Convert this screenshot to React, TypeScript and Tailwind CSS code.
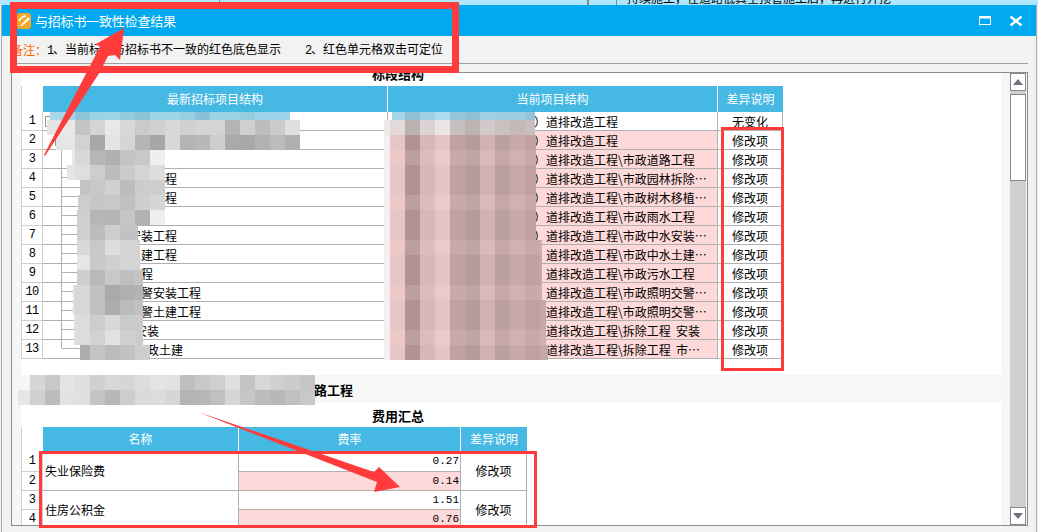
import React from 'react';

type TreeRow = { text: string; pad: number };

const treeRows: TreeRow[] = [
  { text: '', pad: 0 },
  { text: '', pad: 0 },
  { text: '', pad: 0 },
  { text: '工程', pad: 110 },
  { text: '工程', pad: 110 },
  { text: '', pad: 0 },
  { text: '安装工程', pad: 86 },
  { text: '土建工程', pad: 86 },
  { text: '水工程', pad: 74 },
  { text: '交警安装工程', pad: 86 },
  { text: '交警土建工程', pad: 86 },
  { text: '安装', pad: 92 },
  { text: '市政土建', pad: 92 },
];

const currentRows = [
  '道排改造工程',
  '道排改造工程',
  '道排改造工程\\市政道路工程',
  '道排改造工程\\市政园林拆除…',
  '道排改造工程\\市政树木移植…',
  '道排改造工程\\市政雨水工程',
  '道排改造工程\\市政中水安装…',
  '道排改造工程\\市政中水土建…',
  '道排改造工程\\市政污水工程',
  '道排改造工程\\市政照明交警…',
  '道排改造工程\\市政照明交警…',
  '道排改造工程\\拆除工程  安装',
  '道排改造工程\\拆除工程  市…',
];

type MosaicRow = { y: number; h: number; x0: number; x1?: number; cols: string[] };

const gray: MosaicRow[] = [
  { y: 112, h: 8, x0: 50, x1: 290, cols: ['a8d8ea', 'a4d6ea', '8fc4da', '9ed0e6', '9fd5ea', '93cade', '8cc2d8', '9ed3e8', '9fd5ea', '99cfe3', '8bc0d6', '9dd2e6', '9dd2e6', '97cce0', '9fd5ea', '9fd5ea', '9fd5ea'] },
  { y: 120, h: 15, x0: 47, cols: ['e4e4e4', 'e8e8e8', 'c4c4c4', 'd4d4d4', 'e8e8e8', 'd8d8d8', 'cacaca', 'd0d0d0', 'd8d8d8', 'd0d0d0', 'd4d4d4', 'd4d4d4', 'b4b4b4', 'cfcfcf', 'bdbdbd', 'cbcbcb', 'dfdfdf'] },
  { y: 135, h: 15, x0: 56, cols: ['e6e6e6', 'e6e6e6', 'd2d2d2', 'a8a8a8', 'e4e4e4', 'd6d6d6', 'b5b5b5', 'a6a6a6', 'd8d8d8', 'b4b4b4', 'b8b8b8', 'cecece', 'aaaaaa', 'a8a8a8', 'b2b2b2', 'bcbcbc', 'b0b0b0'] },
  { y: 150, h: 15, x0: 72, cols: ['e8e8e8', 'd8d8d8', 'b6b6b6', 'b0b0b0', 'c4c4c4', 'c8c8c8', 'efefef'] },
  { y: 165, h: 15, x0: 67, cols: ['e4e4e4', 'dedede', 'cdcdcd', 'bcbcbc', 'cbcbcb', 'd4d4d4', 'dddddd'] },
  { y: 180, h: 15, x0: 80, cols: ['c4c4c4', 'c8c8c8', 'd0d0d0', 'bcbcbc', 'cccccc', 'cecece'] },
  { y: 195, h: 15, x0: 78, cols: ['cdcdcd', 'c6c6c6', 'c8c8c8', 'c0c0c0', 'cecece', 'd6d6d6'] },
  { y: 210, h: 15, x0: 77, cols: ['cfcfcf', 'b6b6b6', 'b5b5b5', 'c6c6c6', 'b2b2b2', 'eeeeee'] },
  { y: 225, h: 15, x0: 77, x1: 138, cols: ['d0d0d0', 'bcbcbc', 'cdcdcd', 'c2c2c2', 'c2c2c2'] },
  { y: 240, h: 15, x0: 77, x1: 140, cols: ['d8d8d8', 'c8c8c8', 'dddddd', 'd4d4d4', 'd4d4d4'] },
  { y: 255, h: 15, x0: 77, x1: 140, cols: ['e6e6e6', 'c9c9c9', 'cfcfcf', 'd4d4d4', 'd4d4d4'] },
  { y: 270, h: 15, x0: 77, x1: 143, cols: ['cecece', 'b9b9b9', 'c8c8c8', 'bfbfbf', 'c5c5c5'] },
  { y: 285, h: 15, x0: 73, x1: 143, cols: ['e0e0e0', 'd8d8d8', 'c0c0c0', 'aaaaaa', 'b0b0b0', 'b4b4b4'] },
  { y: 300, h: 15, x0: 73, x1: 143, cols: ['e0e0e0', 'd8d8d8', 'c1c1c1', 'adadad', 'bbbbbb', 'c2c2c2'] },
  { y: 315, h: 15, x0: 74, x1: 143, cols: ['e4e4e4', 'dcdcdc', 'cdcdcd', 'd8d8d8', 'cacaca', 'cccccc'] },
  { y: 330, h: 15, x0: 74, x1: 143, cols: ['e4e4e4', 'dcdcdc', 'd2d2d2', 'e2e2e2', 'd0d0d0', 'cccccc'] },
  { y: 345, h: 15, x0: 80, x1: 153, cols: ['adadad', 'c4c4c4', 'bbbbbb', 'c2c2c2', 'cdcdcd'] },
  { y: 375, h: 15, x0: 30, cols: ['d6d6d6', 'c8c8c8', 'e4e4e4', 'dedede', 'd0d0d0', 'd8d8d8', 'd6d6d6', 'dcdcdc', 'e4e4e4', 'e2e2e2', 'bfbfbf', 'c8c8c8', 'cfcfcf', 'dfdfdf', 'c4c4c4', 'd8d8d8', 'd0d0d0', 'cccccc', 'c6c6c6'] },
  { y: 390, h: 15, x0: 18, cols: ['e6e6e6', 'd0d0d0', 'bcbcbc', 'e2e2e2', 'e0e0e0', 'c4c4c4', 'b8b8b8', 'cdcdcd', 'dadada', 'dcdcdc', 'd6d6d6', 'b4b4b4', 'b6b6b6', 'c0c0c0', 'd6d6d6', 'c6c6c6', 'bcbcbc', 'b8b8b8', 'c0c0c0', 'c8c8c8'] },
];

const pinkA = ['f3efef', 'e6c6c6', 'b09494', 'd6b8b8', 'e4c4c4', 'c0a2a2', 'b89c9c', 'd0b2b2', 'bda0a0', 'c8aaaa', 'c0a2a2', 'c6a8a8'];
const pinkB = ['f3efef', 'ecc8c8', 'bca0a0', 'dcbcbc', 'eacaca', 'c8aaaa', 'c2a6a6', 'd8baba', 'c6a8a8', 'd0b2b2', 'c8aaaa', 'ceb0b0'];
const pinkEdge = (y: number) => (y < 240 ? 536 : y < 300 ? 542 : y < 345 ? 546 : 548);

const pink: MosaicRow[] = [
  { y: 112, h: 8, x0: 392, x1: 535, cols: ['a6d6e6', '8fc0d4', 'a0d0e2', 'a8dcee', '94c6da', '8fc0d4', 'a0d0e2', '9ccde0', '9ccde0', '93c4d8'] },
  { y: 120, h: 15, x0: 384, x1: 535, cols: ['eeeaea', 'e2dada', 'bcb0b0', 'dcd4d4', 'ebe4e4', 'c8c0c0', 'bdb3b3', 'd2caca', 'cbc0c0', 'c4b8b8', 'cabfbf', 'd8d0d0'] },
  ...[135, 150, 165, 180, 195, 210, 225, 240, 255, 270, 285, 300, 315, 330, 345].map((y, i) => ({
    y,
    h: 15,
    x0: 384,
    x1: pinkEdge(y),
    cols: i % 3 === 1 ? pinkB : pinkA,
  })),
];

const Mosaic = ({ rows, start }: { rows: MosaicRow[]; start: number }) => (
  <>
    {rows.map((row) =>
      row.cols.map((c, i) => {
        const cell = start + (Math.floor((row.x0 - start) / 15) + i) * 15;
        const x = Math.max(cell, row.x0);
        const right = Math.min(cell + 15, row.x1 ?? cell + 15);
        if (right <= x) return null;
        return <rect key={`${row.y}-${i}`} x={x} y={row.y} width={right - x} height={row.h} fill={`#${c}`} />;
      }),
    )}
  </>
);

const RowNum = ({ n, tall }: { n: number; tall?: boolean }) => (
  <div className={`w-[22px] shrink-0 ${tall ? 'h-[21px]' : 'h-[19px]'} border-r border-b border-[#d0d0d0] border-l flex items-center justify-center text-[12px] font-['Liberation_Mono',monospace] tracking-[-0.6px] text-black`}>
    {n}
  </div>
);

const App: React.FC = () => {
  return (
    <div className="relative w-[1038px] h-[532px] overflow-hidden bg-[#f2f2f2] text-[12px] leading-none text-black font-['Noto_Sans_CJK_SC',sans-serif]">
      {/* window behind the dialog */}
      <div className="h-[5px] bg-[#aee6fb] overflow-hidden flex">
        <div className="w-[220px] h-full border-r border-[#888]" />
        <div className="w-[369px] h-full border-r-2 border-[#888]" />
        <div className="w-[28px] h-full border-r border-[#888]" />
        <div className="-mt-[8px] pl-[10px] whitespace-nowrap">持续施工，在道路低真空顶管施工后，再进行开挖</div>
      </div>

      <div className="mx-[1px] border-x border-[#a8a8a8] h-[527px] flex flex-col">
        <div className="h-[31px] shrink-0 bg-[#00a9f0] flex items-center pl-[15px] pr-[13px] text-white">
          <svg width="15" height="16" viewBox="0 0 15 16" className="shrink-0">
            <rect x="0" y="0" width="14" height="16" rx="3" fill="#f5a623" />
            <path d="M3 13 L11 4 L13 6 L5 13 Z" fill="#fff" />
            <path d="M2 8 Q5 3 9 3" stroke="#fff" strokeWidth="1.5" fill="none" />
          </svg>
          <span className="ml-[3px] text-[13px] tracking-[-0.2px]">与招标书一致性检查结果</span>
          <div className="ml-auto flex items-center gap-[18px]">
            <svg width="12" height="9" viewBox="0 0 12 9">
              <rect x="0.5" y="1" width="11" height="7.5" fill="none" stroke="#fff" />
              <rect x="0" y="0" width="12" height="2.5" fill="#fff" />
            </svg>
            <svg width="14" height="10" viewBox="0 0 14 10">
              <path d="M1.5 0.5 L12.5 9.5 M12.5 0.5 L1.5 9.5" stroke="#fff" strokeWidth="2.4" />
            </svg>
          </div>
        </div>

        <div className="h-[28px] shrink-0 mr-[8px] ml-[9px] border-b border-[#a0a0a0] flex items-center whitespace-nowrap">
          <span className="text-[#ff6600] w-[36px] shrink-0">备注：</span>
          <span className="w-[258px] shrink-0">
            <span className="font-['Liberation_Mono',monospace] tracking-[-1.2px]">1</span>、当前标书与招标书不一致的红色底色显示
          </span>
          <span>
            <span className="font-['Liberation_Mono',monospace] tracking-[-1.2px]">2</span>、红色单元格双击可定位
          </span>
        </div>

        <div className="mt-[8px] ml-[9px] mr-[8px] h-[454px] border border-[#8c8c8c] flex bg-[#f6f6f6]">
          <div className="w-[9px] shrink-0" />
          <div className="w-[980px] shrink-0 flex flex-col">
            <div className="bg-white h-[302px] shrink-0">
              <div className="h-[13px] w-[754px] flex items-center justify-center font-bold text-[13px]">
                <span className="-translate-y-[6px]">标段结构</span>
              </div>
              <div className="flex h-[26px] w-[762px] items-center">
                <div className="w-[22px] h-full bg-white border-l border-[#d0d0d0]" />
                <div className="flex flex-1 h-full items-center bg-[#45b9e4] text-white">
                  <div className="w-[344px] text-center">最新招标项目结构</div>
                  <div className="w-[330px] text-center border-l border-white h-full flex items-center justify-center">当前项目结构</div>
                  <div className="w-[66px] text-center border-l border-white h-full flex items-center justify-center">差异说明</div>
                </div>
              </div>
              {treeRows.map((row, i) => (
                <div key={i} className="flex h-[19px]">
                  <RowNum n={i + 1} />
                  <div className="w-[344px] border-b border-[#b0b0b0] flex items-center pt-[2px]" style={{ paddingLeft: row.pad }}>
                    {row.text}
                  </div>
                  <div className={`w-[330px] border-l border-b border-[#b0b0b0] flex items-center pt-[2px] pl-[158px] ${i > 0 ? 'bg-[#fed9d9]' : ''}`}>
                    <span className="-ml-[12px] w-[12px]">）</span>
                    <span className="whitespace-pre">{currentRows[i]}</span>
                  </div>
                  <div className="w-[66px] border-l border-r border-b border-[#b0b0b0] flex items-center justify-center pt-[2px]">
                    {i === 0 ? '无变化' : '修改项'}
                  </div>
                </div>
              ))}
            </div>

            <div className="h-[28px] shrink-0 bg-[#f7f7f7] flex items-center pl-[293px] font-bold text-[13px]">路工程</div>

            <div className="bg-white flex-1 overflow-hidden">
              <div className="h-[24px] w-[754px] flex items-center justify-center font-bold text-[13px]">费用汇总</div>
              <div className="flex h-[24px] w-[506px] items-center">
                <div className="w-[22px] h-full bg-white border-l border-[#d0d0d0]" />
                <div className="flex flex-1 h-full items-center bg-[#45b9e4] text-white">
                  <div className="w-[195px] text-center">名称</div>
                  <div className="w-[222px] text-center border-l border-white h-full flex items-center justify-center">费率</div>
                  <div className="w-[67px] text-center border-l border-white h-full flex items-center justify-center">差异说明</div>
                </div>
              </div>
              {[
                { name: '失业保险费', a: '0.27', b: '0.14', first: 1, tall: true },
                { name: '住房公积金', a: '1.51', b: '0.76', first: 3, tall: false },
              ].map((g) => (
                <div key={g.name} className="flex w-[506px]">
                  <div className="flex flex-col">
                    <RowNum n={g.first} tall={g.tall} />
                    <RowNum n={g.first + 1} />
                  </div>
                  <div className="w-[196px] border-b border-r border-[#b0b0b0] flex items-center pl-[2px]">{g.name}</div>
                  <div className="w-[221px] flex flex-col font-['Liberation_Mono',monospace] text-[11px]">
                    <div className={`${g.tall ? 'h-[21px]' : 'h-[19px]'} border-b border-[#b0b0b0] flex items-center justify-end pr-[1px]`}>{g.a}</div>
                    <div className="h-[19px] border-b border-[#b0b0b0] bg-[#fed9d9] flex items-center justify-end pr-[1px]">{g.b}</div>
                  </div>
                  <div className="w-[67px] border-x border-b border-[#b0b0b0] flex items-center justify-center">修改项</div>
                </div>
              ))}
            </div>
          </div>
          <div className="w-[9px] shrink-0" />
          <div className="w-[16px] shrink-0 bg-[#d0d0d0] flex flex-col">
            <div className="h-[18px] bg-white border border-[#888] flex items-center justify-center">
              <svg width="10" height="6" viewBox="0 0 10 6"><path d="M5 0 L10 6 L0 6 Z" fill="#6f7080" /></svg>
            </div>
            <div className="mt-[3px] h-[87px] bg-white border border-[#888]" />
            <div className="mt-auto h-[18px] bg-white border border-[#888] flex items-center justify-center">
              <svg width="10" height="6" viewBox="0 0 10 6"><path d="M0 0 L10 0 L5 6 Z" fill="#6f7080" /></svg>
            </div>
          </div>
        </div>
      </div>

      {/* tree lines and checkboxes */}
      <svg className="absolute inset-0 pointer-events-none" width="1038" height="532">
        <rect x="45.5" y="116.5" width="9" height="10" fill="#fff" stroke="#999" />
        <rect x="55.5" y="136.5" width="10" height="9" fill="#fff" stroke="#999" />
        <path d="M61.5 146 V348.5 M62 177.5 H80 M62 196.5 H80 M62 215.5 H80 M62 234.5 H80 M62 253.5 H80 M62 272.5 H80 M62 291.5 H80 M62 310.5 H80 M62 329.5 H80 M62 348.5 H80" stroke="#b0b0b0" fill="none" />
        <Mosaic rows={gray} start={75} />
        <Mosaic rows={pink} start={390} />
      </svg>

      {/* red annotations */}
      <div className="absolute left-[10px] top-[2px] w-[449px] h-[71px] border-[7px] border-[#ff3b3b]" />
      <div className="absolute left-[721px] top-[127px] w-[63px] h-[244px] border-[3px] border-[#ff3b3b]" />
      <div className="absolute left-[39px] top-[451px] w-[498px] h-[77px] border-[3px] border-[#ff3b3b]" />
      <svg className="absolute inset-0 pointer-events-none" width="1038" height="532">
        <polygon points="44,155 92,62 100,47 96,44 124,28 120,60 115,55 108,56 100,72 45,156" fill="#ff3b3b" />
        <polygon points="198,412 374,472 379,467 400,487 374,492 377,482" fill="#ff3b3b" />
      </svg>
    </div>
  );
};

export default App;
